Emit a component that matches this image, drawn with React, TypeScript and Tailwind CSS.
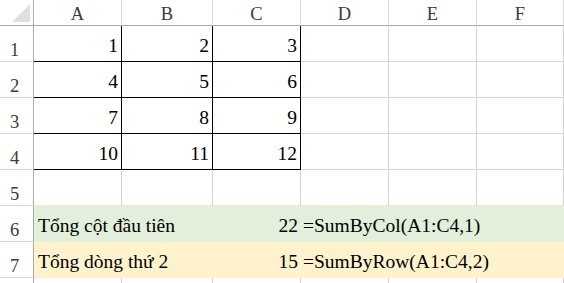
import React from 'react';

// text sits in a plain span that names its own family
const SERIF: React.CSSProperties = { fontFamily: '"Liberation Serif", "Times New Roman", serif' };
const GRID = 'border-[#d4d4d4]';

function T({ children }: { children?: React.ReactNode }) {
  return <span style={SERIF}>{children}</span>;
}

function RowHead({ n }: { n?: number }) {
  return (
    <div className="w-[34px] shrink-0 border-r border-b border-r-[#ababab] border-b-[#d4d4d4] flex items-end justify-center pr-1 pb-[1px] text-[18.5px] leading-[20px] text-[#3b3b3b]">
      {n !== undefined && <T>{n}</T>}
    </div>
  );
}

function ColHead({ w, label }: { w: string; label: string }) {
  return (
    <div
      className={`${w} shrink-0 border-r border-b border-r-[#dadada] border-b-[#ababab] flex items-end justify-center pb-[1px] text-[18.5px] leading-[20px] text-[#3b3b3b]`}
    >
      <T>{label}</T>
    </div>
  );
}

// numeric cell inside the bordered block A1:C4
function NumCell({ w, v }: { w: string; v: number }) {
  return (
    <div className={`${w} shrink-0 border-r border-b border-black flex items-end justify-end pr-[3px] pb-[5px] text-[19.5px] leading-[20px] text-black`}>
      <T>{v}</T>
    </div>
  );
}

function Empty({ w, extra = '' }: { w: string; extra?: string }) {
  return <div className={`${w} shrink-0 border-r border-b ${GRID} ${extra}`} />;
}

function SumRow({ n, bg, label, value, formula }: { n: number; bg: string; label: string; value: number; formula: string }) {
  return (
    <div className="flex h-[36px]">
      <RowHead n={n} />
      <div className={`flex flex-1 ${bg} text-[19.5px] leading-[20px] text-black whitespace-nowrap`}>
        <div className="w-[179px] shrink-0 flex items-end pl-1 pb-[6px]"><T>{label}</T></div>
        <div className="w-[88px] shrink-0 flex items-end justify-end pr-[3px] pb-[6px]"><T>{value}</T></div>
        <div className="flex-1 flex items-end pl-[2px] pb-[6px]"><T>{formula}</T></div>
      </div>
    </div>
  );
}

const data = [
  [1, 2, 3],
  [4, 5, 6],
  [7, 8, 9],
  [10, 11, 12],
];

export default function App() {
  return (
    <div className="w-[564px] h-[283px] overflow-hidden bg-white">
      {/* Column headers */}
      <div className="flex h-[26px]">
        <div className="w-[34px] shrink-0 border-r border-b border-[#ababab]">
          <svg width="33" height="25" viewBox="0 0 33 25" className="block">
            <polygon points="30,4 30,22 12,22" fill="#dfdfdf" />
          </svg>
        </div>
        <ColHead w="w-[88px]" label="A" />
        <ColHead w="w-[91px]" label="B" />
        <ColHead w="w-[88px]" label="C" />
        <ColHead w="w-[88px]" label="D" />
        <ColHead w="w-[88px]" label="E" />
        <ColHead w="flex-1" label="F" />
      </div>

      {/* Rows 1-4: bordered number block */}
      {data.map((row, i) => (
        <div key={i} className="flex h-[36px]">
          <RowHead n={i + 1} />
          <NumCell w="w-[88px]" v={row[0]} />
          <NumCell w="w-[91px]" v={row[1]} />
          <NumCell w="w-[88px]" v={row[2]} />
          <Empty w="w-[88px]" />
          <Empty w="w-[88px]" />
          <Empty w="flex-1" />
        </div>
      ))}

      {/* Row 5: empty */}
      <div className="flex h-[36px]">
        <RowHead n={5} />
        <Empty w="w-[88px]" extra="border-b-[#e2efda]" />
        <Empty w="w-[91px]" extra="border-b-[#e2efda]" />
        <Empty w="w-[88px]" extra="border-b-[#e2efda]" />
        <Empty w="w-[88px]" extra="border-b-[#e2efda]" />
        <Empty w="w-[88px]" extra="border-b-[#e2efda]" />
        <Empty w="flex-1" extra="border-b-[#e2efda]" />
      </div>

      <SumRow n={6} bg="bg-[#e2efda]" label="Tổng cột đầu tiên" value={22} formula="=SumByCol(A1:C4,1)" />
      <SumRow n={7} bg="bg-[#fff2cc]" label="Tổng dòng thứ 2" value={15} formula="=SumByRow(A1:C4,2)" />

      {/* Row 8 (only its top edge is visible) */}
      <div className="flex h-[36px]">
        <RowHead />
        <Empty w="w-[88px]" />
        <Empty w="w-[91px]" />
        <Empty w="w-[88px]" />
        <Empty w="w-[88px]" />
        <Empty w="w-[88px]" />
        <Empty w="flex-1" />
      </div>
    </div>
  );
}
